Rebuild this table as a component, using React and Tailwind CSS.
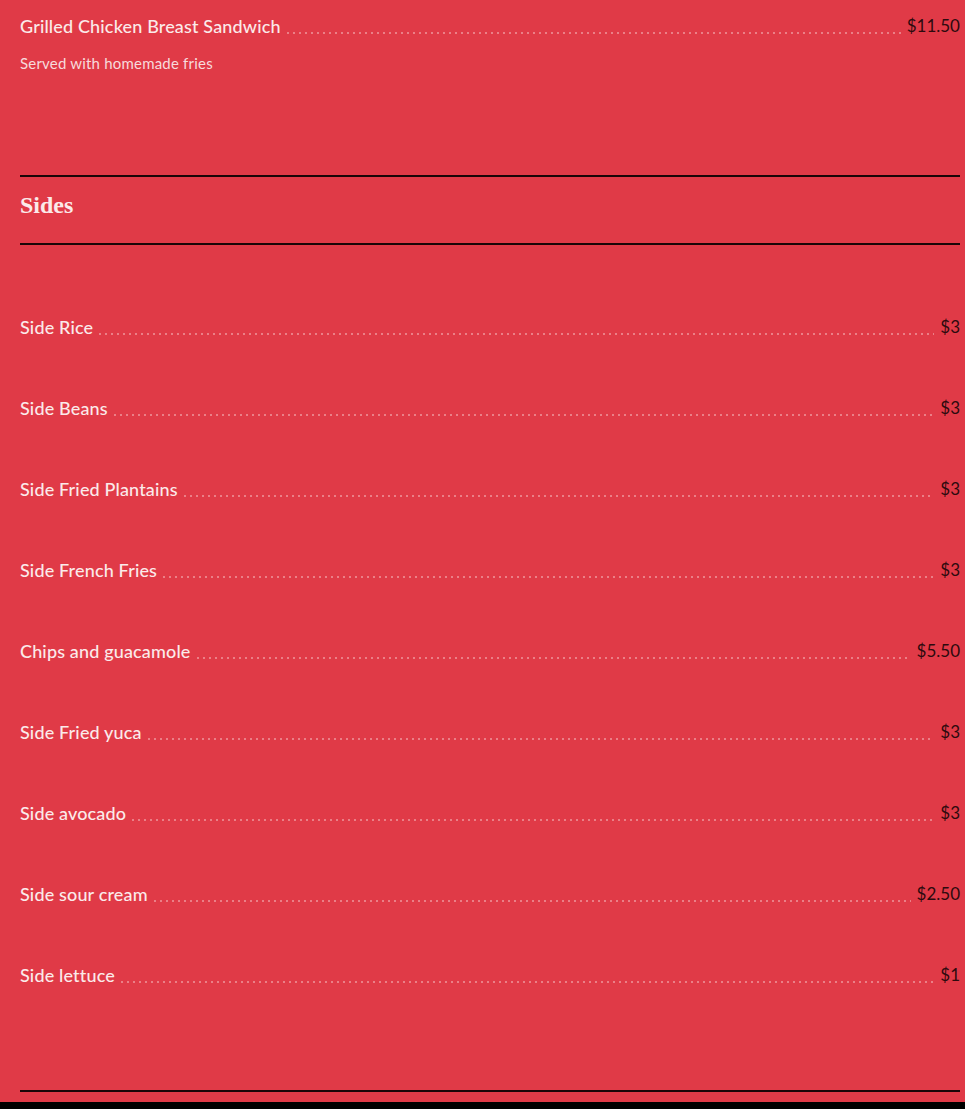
import React from 'react';

const sides = [
  { name: 'Side Rice', price: '$3' },
  { name: 'Side Beans', price: '$3' },
  { name: 'Side Fried Plantains', price: '$3' },
  { name: 'Side French Fries', price: '$3' },
  { name: 'Chips and guacamole', price: '$5.50' },
  { name: 'Side Fried yuca', price: '$3' },
  { name: 'Side avocado', price: '$3' },
  { name: 'Side sour cream', price: '$2.50' },
  { name: 'Side lettuce', price: '$1' },
];

const Dots = () => (
  <span className="flex-1 mx-1.5 h-[2px] mb-[4px] self-end bg-[linear-gradient(to_right,rgba(255,255,255,0.35)_2px,transparent_2px)] bg-[length:6px_2px] bg-repeat-x" />
);

const Row = ({ name, price }) => (
  <div className="flex items-end h-6">
    <span className="text-[18px] leading-6 font-medium tracking-[0.15px] text-[#fbeaea] whitespace-nowrap">{name}</span>
    <Dots />
    <span className="text-[17px] leading-6 text-[#2d0a0e] whitespace-nowrap">{price}</span>
  </div>
);

export default function App() {
  return (
    <div className="w-[965px] min-h-[1109px] bg-[#e03a47] flex flex-col font-['Lato','Liberation_Sans',sans-serif]">
      <div className="pl-5 pr-[5px] pt-[14px]">
        <Row name="Grilled Chicken Breast Sandwich" price="$11.50" />
        <p className="mt-[15px] text-[15px] leading-5 tracking-[0.2px] text-[#f7dadc]">Served with homemade fries</p>
      </div>

      <div className="pl-5 pr-[5px] mt-[102px]">
        <div className="border-t-2 border-[#1a0507] h-[68px] flex items-center">
          <h2 className="font-['Liberation_Serif',serif] font-bold text-[24px] text-[#fbeaea] leading-none -mt-[10px]">Sides</h2>
        </div>
        <div className="border-t-2 border-[#1a0507]" />
      </div>

      <div className="pl-5 pr-[5px] pt-[70px] flex flex-col gap-[57px]">
        {sides.map((s) => (
          <Row key={s.name} name={s.name} price={s.price} />
        ))}
      </div>

      <div className="pl-5 pr-[5px] mt-[103px]">
        <div className="border-t-2 border-[#1a0507]" />
      </div>
      <div className="mt-[10px] h-[7px] bg-black" />
    </div>
  );
}
